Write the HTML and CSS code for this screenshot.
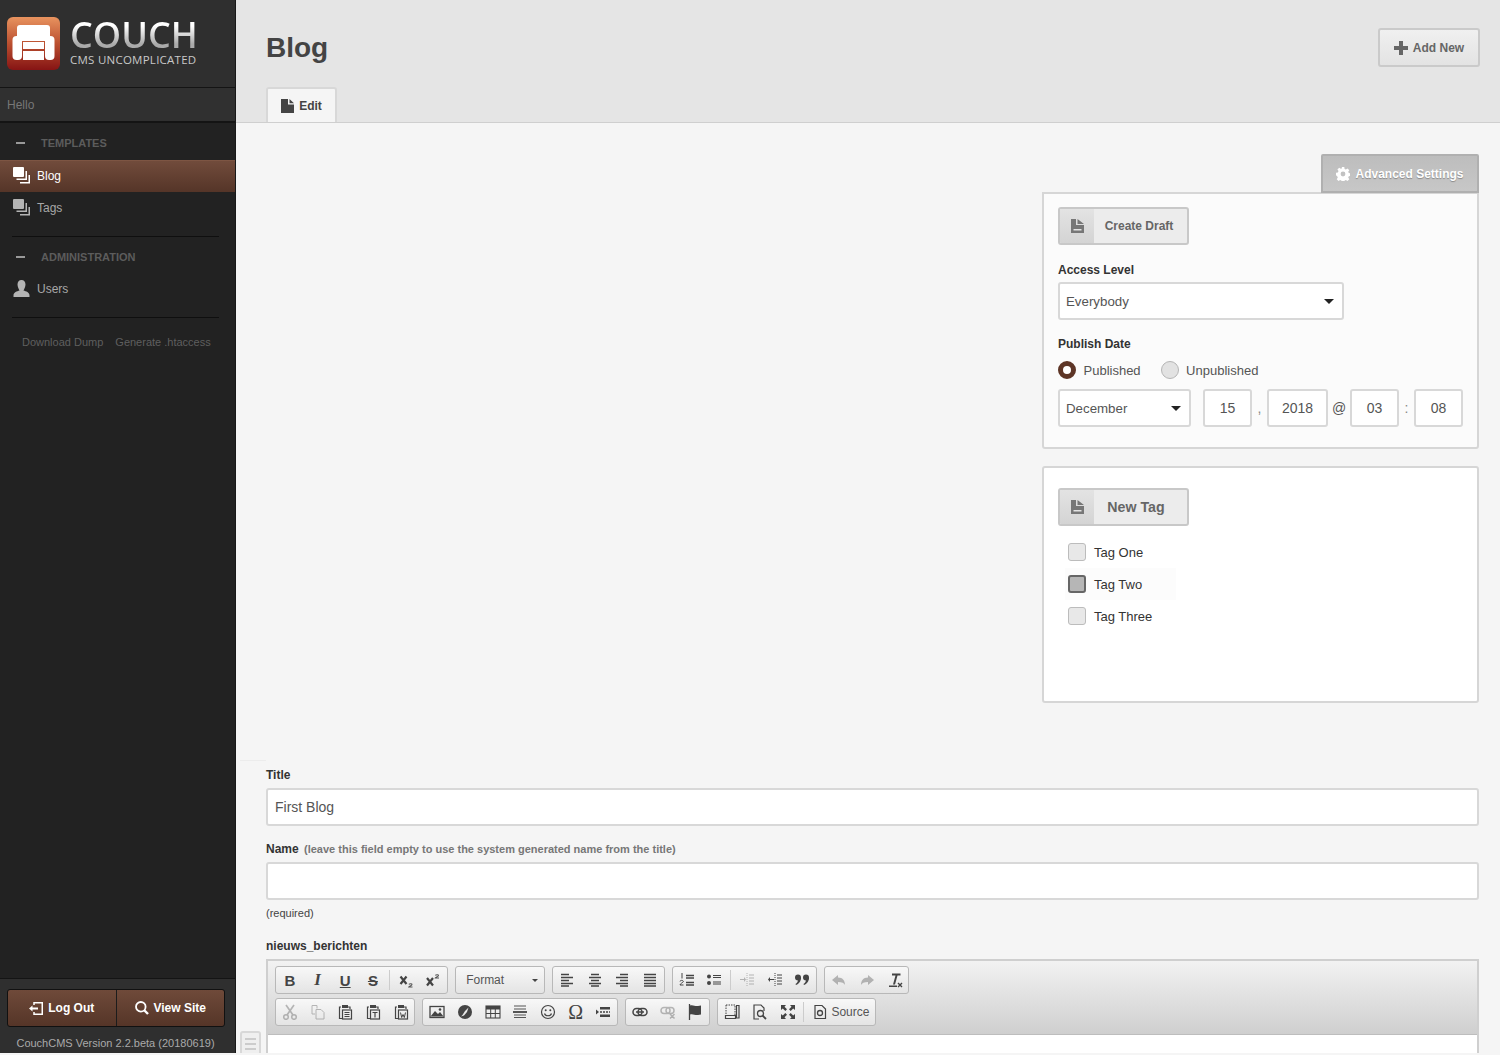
FILE: index.html
```html
<!DOCTYPE html>
<html lang="en">
<head>
<meta charset="utf-8">
<title>Blog - CouchCMS</title>
<link rel="stylesheet" href="styles.css">
</head>
<body>
<svg class="defs" width="0" height="0" aria-hidden="true">
  <symbol id="i-stack" viewBox="0 0 17 17"><rect x="0" y="0" width="11" height="10" rx="1" fill="currentColor"/><path d="M12.500 4v7.500H3.500v1.500H14V4zM15.500 8v7H7v1.500h10V8z" fill="currentColor"/></symbol>
  <symbol id="i-draft" viewBox="0 0 13 14"><path d="M0 0h5v6h8v8H0zM6.500 0 13 5H6.500z" fill="currentColor"/><rect x="2.500" y="10" width="8" height="1.500" fill="#e3e3e3"/></symbol>
</svg>
<div class="app">
  <aside class="sidebar">
    <div class="brand">
      <svg class="logo-mark" viewBox="0 0 53 53" width="53" height="53" aria-hidden="true">
        <defs><linearGradient id="lg" x1="0" y1="0" x2="0" y2="1"><stop offset="0" stop-color="#e8935f"/><stop offset=".5" stop-color="#bb5030"/><stop offset="1" stop-color="#861414"/></linearGradient></defs>
        <rect width="53" height="53" rx="6" fill="url(#lg)"/>
        <rect x="10" y="8" width="33" height="16" rx="3" fill="#fff"/>
        <rect x="5.500" y="19" width="9.500" height="24" rx="4" fill="#fff"/>
        <rect x="38" y="19" width="9.500" height="24" rx="4" fill="#fff"/>
        <rect x="16" y="25" width="21" height="7" fill="#fff"/>
        <rect x="16" y="34" width="21" height="9" fill="#fff"/>
      </svg>
      <div class="wordmark">
        <div class="wm-big">COUCH</div>
        <div class="wm-small">CMS UNCOMPLICATED</div>
      </div>
    </div>
    <div class="hello">Hello</div>
    <nav class="nav">
      <div class="nav-head"><span class="dash"></span>TEMPLATES</div>
      <a class="nav-item active"><svg class="nav-ic"><use href="#i-stack"/></svg>Blog</a>
      <a class="nav-item"><svg class="nav-ic"><use href="#i-stack"/></svg>Tags</a>
      <div class="nav-rule"></div>
      <div class="nav-head"><span class="dash"></span>ADMINISTRATION</div>
      <a class="nav-item"><svg class="nav-ic" viewBox="0 0 17 17"><path d="M8.500 0c2.500 0 4 2 4 4.500S11 9.500 10.500 10.500c2.500 1 6 1.500 6 5v1.500H.5v-1.500c0-3.500 3.500-4 6-5C6 9.500 4.500 7 4.500 4.500S6 0 8.500 0z" fill="currentColor"/></svg>Users</a>
      <div class="nav-rule"></div>
      <div class="tools"><a>Download Dump</a><a>Generate .htaccess</a></div>
    </nav>
    <div class="side-foot">
      <div class="foot-btns">
        <a class="foot-btn"><svg width="14" height="13" viewBox="0 0 14 13"><path d="M5 3V.75h8.250v11.500H5V10" fill="none" stroke="#fff" stroke-width="1.500"/><path d="M0 6.500l3.500-3v2H9v2H3.500v2z" fill="#fff"/></svg>Log Out</a>
        <a class="foot-btn"><svg width="14" height="14" viewBox="0 0 14 14"><circle cx="5.800" cy="5.800" r="4.800" fill="none" stroke="#fff" stroke-width="1.800"/><path d="M9 9l4 4" stroke="#fff" stroke-width="2.400"/></svg>View Site</a>
      </div>
      <div class="version">CouchCMS Version 2.2.beta (20180619)</div>
    </div>
  </aside>
  <main class="main">
    <header class="top">
      <div class="top-row">
        <h1>Blog</h1>
        <a class="add-new"><svg width="14" height="14" viewBox="0 0 14 14"><path d="M5 0h4v5h5v4H9v5H5V9H0V5h5z" fill="currentColor"/></svg>Add New</a>
      </div>
      <div class="tab"><svg width="13" height="14" viewBox="0 0 13 14"><path d="M0 0h7v5.500h6V14H0zM8.500 0 13 4.200H8.500z" fill="currentColor"/></svg>Edit</div>
    </header>
    <div class="content">
      <section class="side">
        <div class="adv-row"><a class="adv"><svg width="14" height="14" viewBox="0 0 14 14"><path fill="#fff" fill-rule="evenodd" d="M5.700 0h2.600l.3 1.900 1.300.6 1.600-1.100 1.800 1.800-1.100 1.600.6 1.300 1.900.3v2.600l-1.900.3-.6 1.300 1.100 1.600-1.800 1.800-1.600-1.100-1.300.6-.3 1.900H5.700l-.3-1.900-1.300-.6-1.600 1.100-1.800-1.800 1.100-1.600-.6-1.300L0 8.300V5.700l1.900-.3.6-1.300L1.400 2.500l1.800-1.800 1.600 1.100 1.300-.6zM7 4.600a2.400 2.400 0 1 0 0 4.800 2.400 2.400 0 0 0 0-4.800z"/></svg>Advanced Settings</a></div>
        <div class="panel settings">
          <a class="icon-btn"><span class="ib-ic"><svg width="13" height="14"><use href="#i-draft"/></svg></span><span class="ib-label">Create Draft</span></a>
          <label class="f-label access">Access Level</label>
          <div class="select wide"><span>Everybody</span><i class="caret"></i></div>
          <label class="f-label publish">Publish Date</label>
          <div class="radios">
            <span class="radio on"></span><span class="r-text">Published</span>
            <span class="radio"></span><span class="r-text">Unpublished</span>
          </div>
          <div class="date-row">
            <div class="select month"><span>December</span><i class="caret"></i></div>
            <div class="box d15">15</div><span class="dsep">,</span>
            <div class="box y">2018</div><span class="dsep at">@</span>
            <div class="box t">03</div><span class="dsep">:</span>
            <div class="box t">08</div>
          </div>
        </div>
        <div class="panel tags">
          <a class="icon-btn big"><span class="ib-ic"><svg width="13" height="14"><use href="#i-draft"/></svg></span><span class="ib-label">New Tag</span></a>
          <div class="check-list">
            <div class="check"><span class="cb"></span>Tag One</div>
            <div class="check sel"><span class="cb"></span>Tag Two</div>
            <div class="check"><span class="cb"></span>Tag Three</div>
          </div>
        </div>
      </section>
      <div class="divider"></div>
      <section class="fields">
        <label class="f-label">Title</label>
        <div class="input">First Blog</div>
        <label class="f-label name">Name <em>(leave this field empty to use the system generated name from the title)</em></label>
        <div class="input"></div>
        <div class="hint">(required)</div>
        <label class="f-label editor-label">nieuws_berichten</label>
        <div class="editor">
          <div class="toolbar">
            <div class="tb-row">
              <div class="tb-group">
                <span class="btn tx"><b>B</b></span>
                <span class="btn tx serif"><b><i>I</i></b></span>
                <span class="btn tx"><b class="ul">U</b></span>
                <span class="btn tx"><b class="st">S</b></span>
                <span class="sep"></span>
                <span class="btn"><svg viewBox="0 0 16 16"><path d="M2.500 4.500l6 7.500M8.500 4.500l-6 7.500" stroke="#444" stroke-width="2.200"/><path d="M10.500 15.500c0-1.300 3.500-1.500 3.500-3 0-1-2.300-1-3.200-.2M10.500 15h4" fill="none" stroke="#555" stroke-width="1.100"/></svg></span>
                <span class="btn"><svg viewBox="0 0 16 16"><path d="M2 6l6 7.500M8 6l-6 7.500" stroke="#444" stroke-width="2.200"/><path d="M10 6.500c0-1.300 3.500-1.500 3.500-3 0-1-2.300-1-3.200-.2M10 6h4" fill="none" stroke="#555" stroke-width="1.100"/></svg></span>
              </div>
              <div class="tb-group combo"><span class="combo-text">Format</span><i class="mini-caret"></i></div>
              <div class="tb-group">
                <span class="btn"><svg viewBox="0 0 16 16"><path d="M2 2.500h8M2 5.500h12M2 8.500h8M2 11.500h12M2 14h8" stroke="#444" stroke-width="1.500"/></svg></span>
                <span class="btn"><svg viewBox="0 0 16 16"><path d="M4 2.500h8M2 5.500h12M4 8.500h8M2 11.500h12M4 14h8" stroke="#444" stroke-width="1.500"/></svg></span>
                <span class="btn"><svg viewBox="0 0 16 16"><path d="M6 2.500h8M2 5.500h12M6 8.500h8M2 11.500h12M6 14h8" stroke="#444" stroke-width="1.500"/></svg></span>
                <span class="btn"><svg viewBox="0 0 16 16"><path d="M2 2.500h12M2 5.500h12M2 8.500h12M2 11.500h12M2 14h12" stroke="#444" stroke-width="1.500"/></svg></span>
              </div>
              <div class="tb-group">
                <span class="btn"><svg viewBox="0 0 16 16"><path d="M7 3.500h8M7 6h8M7 10.500h8M7 13h8" stroke="#444" stroke-width="1.300"/><path d="M3 1v5.500M1 9.500c0-1.500 3.500-1.500 3.300 0 0 1-3.300 2-3.300 3.500h3.500" fill="none" stroke="#444" stroke-width="1"/></svg></span>
                <span class="btn"><svg viewBox="0 0 16 16"><circle cx="3" cy="4.500" r="2" fill="#444"/><circle cx="3" cy="11" r="2" fill="#444"/><path d="M7 3.500h8M7 5.500h8M7 10h8M7 12h8" stroke="#444" stroke-width="1.200"/></svg></span>
                <span class="sep"></span>
                <span class="btn dim"><svg viewBox="0 0 16 16"><path d="M8 1v14" stroke="#444" stroke-dasharray="1 1"/><path d="M10 3h5M10 6h5M10 9h5M10 12h5" stroke="#444" stroke-width="1.200"/><path d="M1 7.500h4" stroke="#444"/><path d="M5 5l2 2.500-2 2.500z" fill="#444"/></svg></span>
                <span class="btn"><svg viewBox="0 0 16 16"><path d="M8 1v14" stroke="#444" stroke-dasharray="1 1"/><path d="M10 3h5M10 6h5M10 9h5M10 12h5" stroke="#444" stroke-width="1.200"/><path d="M7 7.500H3" stroke="#444"/><path d="M3 5 1 7.500 3 10z" fill="#444"/></svg></span>
                <span class="btn"><svg viewBox="0 0 16 16"><circle cx="4" cy="5.500" r="3" fill="#444"/><circle cx="12" cy="5.500" r="3" fill="#444"/><path d="M7 5.500C7 9 5 12 2 13l-.5-1c1.500-1 2.500-2.500 2.500-4.500zM15 5.500c0 3.500-2 6.500-5 7.500l-.5-1c1.500-1 2.500-2.500 2.500-4.500z" fill="#444"/></svg></span>
              </div>
              <div class="tb-group">
                <span class="btn dim"><svg viewBox="0 0 16 16"><path d="M7 3 1 8l6 5v-3c4 0 6 1 7 3 0-4-2-7.500-7-7.500z" fill="#444"/></svg></span>
                <span class="btn dim"><svg viewBox="0 0 16 16"><path d="M9 3l6 5-6 5v-3c-4 0-6 1-7 3 0-4 2-7.500 7-7.500z" fill="#444"/></svg></span>
                <span class="btn"><svg viewBox="0 0 16 16"><path d="M5 1.500h8.500v2H10.500L8 12.500H6l2.500-9H5zM2 13.500h8v1.500H2z" fill="#444"/><path d="M11 11l4 4M15 11l-4 4" stroke="#444" stroke-width="1.400"/></svg></span>
              </div>
            </div>
            <div class="tb-row">
              <div class="tb-group">
                <span class="btn dim"><svg viewBox="0 0 16 16"><circle cx="4" cy="13" r="2.300" fill="none" stroke="#444" stroke-width="1.500"/><circle cx="12" cy="13" r="2.300" fill="none" stroke="#444" stroke-width="1.500"/><path d="M5 11 12 1M11 11 4 1" stroke="#444" stroke-width="1.700"/></svg></span>
                <span class="btn dim"><svg viewBox="0 0 16 16"><path d="M2 1.500h5v3M2 1.500v8.500h3M6 5.500h5l3 3v6.500H6z" fill="none" stroke="#444"/></svg></span>
                <span class="btn"><svg viewBox="0 0 16 16"><path d="M4 3H2.500v11.500H5" fill="none" stroke="#444" stroke-width="1.200"/><path d="M11 3h2v2" fill="none" stroke="#444" stroke-width="1.200"/><rect x="5" y="1" width="6" height="3" fill="#444"/><rect x="5.500" y="6" width="9" height="9" fill="none" stroke="#444" stroke-width="1.200"/><path d="M7.500 8.500h5M7.500 10.500h5M7.500 12.500h5" stroke="#444"/></svg></span>
                <span class="btn"><svg viewBox="0 0 16 16"><path d="M4 3H2.500v11.500H5" fill="none" stroke="#444" stroke-width="1.200"/><path d="M11 3h2v2" fill="none" stroke="#444" stroke-width="1.200"/><rect x="5" y="1" width="6" height="3" fill="#444"/><rect x="5.500" y="6" width="9" height="9" fill="none" stroke="#444" stroke-width="1.200"/><path d="M7.500 8.500h5M10 8.500v5" stroke="#444" stroke-width="1.200"/></svg></span>
                <span class="btn"><svg viewBox="0 0 16 16"><path d="M4 3H2.500v11.500H5" fill="none" stroke="#444" stroke-width="1.200"/><path d="M11 3h2v2" fill="none" stroke="#444" stroke-width="1.200"/><rect x="5" y="1" width="6" height="3" fill="#444"/><rect x="5.500" y="6" width="9" height="9" fill="none" stroke="#444" stroke-width="1.200"/><path d="M7.500 8.500l1.200 5 1.300-3 1.300 3 1.200-5" fill="none" stroke="#444"/></svg></span>
              </div>
              <div class="tb-group">
                <span class="btn"><svg viewBox="0 0 16 16"><rect x="1" y="2.500" width="14" height="11" fill="none" stroke="#444" stroke-width="1.300"/><path d="M1.500 12.500 6 7l3 3 2-2 3.500 4.500z" fill="#444"/><circle cx="11" cy="5.500" r="1.300" fill="#444"/></svg></span>
                <span class="btn"><svg viewBox="0 0 16 16"><circle cx="8" cy="8" r="7" fill="#444"/><path d="M11.500 3.500 8 7 5.500 11 4 12.500 7 11.500 10 8z" fill="#e8e8e8"/></svg></span>
                <span class="btn"><svg viewBox="0 0 16 16"><rect x="1" y="2" width="14" height="12" fill="none" stroke="#444" stroke-width="1.100"/><rect x="1" y="2" width="14" height="3.500" fill="#444"/><path d="M1 9.500h14M5.700 5v9M10.300 5v9" stroke="#444"/></svg></span>
                <span class="btn"><svg viewBox="0 0 16 16"><path d="M2 2h12M2 5h12" stroke="#555" stroke-width="1.200"/><path d="M1 8h14" stroke="#222" stroke-width="1.500"/><path d="M2 11h12M2 13.500h12" stroke="#555" stroke-width="1.200"/></svg></span>
                <span class="btn"><svg viewBox="0 0 16 16"><circle cx="8" cy="8" r="6.500" fill="none" stroke="#444" stroke-width="1.200"/><circle cx="5.700" cy="6.300" r="1" fill="#444"/><circle cx="10.300" cy="6.300" r="1" fill="#444"/><path d="M4.500 9.500c1 3 6 3 7 0" fill="none" stroke="#444" stroke-width="1.200"/></svg></span>
                <span class="btn tx omega">Ω</span>
                <span class="btn"><svg viewBox="0 0 16 16"><path d="M1 5.500v5l3-2.500z" fill="#444"/><path d="M5 8h10" stroke="#444" stroke-width="1.500" stroke-dasharray="2 1"/><path d="M5 3h10v2.500H5zM5 10.500h10V13H5z" fill="#444"/></svg></span>
              </div>
              <div class="tb-group">
                <span class="btn"><svg viewBox="0 0 16 16"><rect x="1" y="4.500" width="9" height="7" rx="3.500" fill="none" stroke="#444" stroke-width="1.500"/><rect x="6" y="4.500" width="9" height="7" rx="3.500" fill="none" stroke="#444" stroke-width="1.500"/><path d="M4 8h8" stroke="#444" stroke-width="1.500"/></svg></span>
                <span class="btn dim"><svg viewBox="0 0 16 16"><rect x="1" y="3.500" width="9" height="6" rx="3" fill="none" stroke="#444" stroke-width="1.500"/><rect x="6" y="3.500" width="8" height="6" rx="3" fill="none" stroke="#444" stroke-width="1.500"/><path d="M10 10l4.500 4.500M14.500 10 10 14.500" stroke="#444" stroke-width="1.500"/></svg></span>
                <span class="btn"><svg viewBox="0 0 16 16"><path d="M2.500 0v16" stroke="#444" stroke-width="1.300"/><path d="M3 1.500c3-1 5 1 8 .5l3-.5v9l-3 .5c-3 .5-5-1.500-8-.5z" fill="#444"/></svg></span>
              </div>
              <div class="tb-group">
                <span class="btn"><svg viewBox="0 0 16 16"><path d="M2 1h9v10" fill="none" stroke="#444" stroke-dasharray="1.500 1"/><path d="M2 1v11" stroke="#444" stroke-dasharray="1.500 1"/><path d="M12.500 1.500h2.500v12.500h-2.500zM1.500 11.500h10v3h-10z" fill="none" stroke="#444" stroke-width="1.200"/></svg></span>
                <span class="btn"><svg viewBox="0 0 16 16"><path d="M7 15H2V1h7l3 3v3" fill="none" stroke="#444" stroke-width="1.200"/><circle cx="8.500" cy="9.500" r="3" fill="none" stroke="#444" stroke-width="1.300"/><path d="M10.500 11.500l3.500 3.500" stroke="#444" stroke-width="1.800"/></svg></span>
                <span class="btn"><svg viewBox="0 0 16 16"><path d="M1 1h5L4.500 2.800 7 5.300 5.300 7 2.800 4.500 1 6zM15 1v5l-1.800-1.500L10.700 7 9 5.300l2.500-2.500L10 1zM1 15v-5l1.800 1.500L5.300 9 7 10.700l-2.500 2.500L6 15zM15 15h-5l1.500-1.800L9 10.700 10.700 9l2.500 2.500L15 10z" fill="#444"/></svg></span>
                <span class="sep"></span>
                <span class="btn-src"><svg width="16" height="16" viewBox="0 0 16 16"><path d="M3 1.500h7l3.500 3.500v9.500H3z" fill="none" stroke="#444" stroke-width="1.200"/><circle cx="8" cy="9" r="2.500" fill="none" stroke="#444" stroke-width="1.300"/></svg><span>Source</span></span>
              </div>
            </div>
          </div>
          <div class="editor-body"></div>
        </div>
      </section>
      <a class="back-toggle"><i></i><i></i><i></i></a>
    </div>
  </main>
</div>
</body>
</html>
```
FILE: styles.css
```css
* { box-sizing: border-box; }
html, body { margin: 0; height: 100%; overflow: hidden; }
body { font-family: "Liberation Sans", Arial, sans-serif; color: #333; background: #f5f5f5; }
a { color: inherit; text-decoration: none; }
.defs { position: absolute; }
.app { display: flex; height: 1053px; }

/* sidebar */
.sidebar { width: 236px; flex: none; display: flex; flex-direction: column; background: #222; border-right: 1px solid #181818; }
.brand { height: 88px; flex: none; background: #2f2f2f; border-bottom: 1px solid #141414; display: flex; align-items: flex-start; padding: 17px 0 0 7px; gap: 10px; }
.logo-mark { flex: none; }
.wordmark { width: 130px; }
.wm-big { font: 600 36px/36px "Open Sans", sans-serif; height: 36px; background: linear-gradient(#fff 25%, #aaa 75%); -webkit-background-clip: text; background-clip: text; color: transparent; }
.wm-small { font: 400 11.500px/11px "Open Sans", sans-serif; color: #c8c8c8; margin-top: 1px; letter-spacing: .25px; white-space: nowrap; }
.hello { height: 35px; flex: none; background: #303030; border-bottom: 2px solid #141414; color: #777; font-size: 12px; line-height: 34px; padding-left: 7px; }
.nav { flex: 1; background: #222; display: flex; flex-direction: column; }
.nav-head { height: 37px; flex: none; display: flex; align-items: center; color: #5c5c5c; font-size: 11px; font-weight: 700; padding: 2px 0 0 16px; }
.dash { width: 9px; height: 2px; background: #999; margin-right: 16px; }
.nav-item { height: 32px; flex: none; display: flex; align-items: center; color: #a8a8a8; font-size: 12px; padding: 0 0 1px 13px; }
.nav-item.active { color: #fff; background: linear-gradient(#724c3c, #553528); box-shadow: inset 0 1px 0 #7d5543; }
.nav-ic { width: 17px; height: 17px; margin-right: 7px; color: #b4b4b4; flex: none; }
.active .nav-ic { color: #fff; }
.nav-rule { height: 1px; background: #0f0f0f; margin: 12px 16px 0 12px; flex: none; }
.nav-rule + .nav-head { height: 34px; margin-top: 2px; padding-top: 1px; }
.tools { display: flex; gap: 12px; padding: 18px 0 0 22px; color: #5f5f5f; font-size: 11px; line-height: 13px; }
.side-foot { height: 75px; flex: none; background: #2f2f2f; border-top: 1px solid #141414; padding: 10px 0 0 7px; }
.foot-btns { display: flex; width: 218px; height: 38px; border: 1px solid #111; border-radius: 3px; background: linear-gradient(#6f4a3a, #553528); }
.foot-btn { flex: 1 1 0; display: flex; align-items: center; justify-content: center; gap: 5px; color: #fff; font-size: 12px; font-weight: 700; }
.foot-btn + .foot-btn { border-left: 1px solid #1c1c1c; }
.version { color: #aaa; font-size: 11px; line-height: 13px; text-align: center; width: 217px; margin-top: 10px; white-space: nowrap; }

/* main */
.main { flex: 1; min-width: 0; display: flex; flex-direction: column; }
.top { height: 123px; flex: none; background: #e5e5e5; border-bottom: 1px solid #cfcfcf; padding: 0 20px 0 30px; display: flex; flex-direction: column; }
.top-row { height: 87px; flex: none; display: flex; align-items: flex-start; justify-content: space-between; }
h1 { margin: 31px 0 0; font-size: 28px; line-height: 34px; font-weight: 700; color: #444; }
.add-new { margin-top: 28px; width: 102px; height: 39px; display: flex; align-items: center; justify-content: center; gap: 5px; border: 2px solid #cacaca; border-radius: 3px; background: linear-gradient(#f0f0f0, #e3e3e3); color: #666; font-size: 12px; font-weight: 700; }
.tab { width: 71px; height: 36px; display: flex; align-items: center; justify-content: center; gap: 5px; background: #f5f5f5; border: 2px solid #d8d8d8; border-bottom: 0; border-radius: 3px 3px 0 0; color: #444; font-size: 12px; font-weight: 700; }
.content { flex: 1; position: relative; padding: 31px 21px 0 30px; overflow: hidden; }
.side { width: 437px; margin-left: auto; }
.adv-row { display: flex; justify-content: flex-end; }
.adv { width: 158px; height: 39px; display: flex; align-items: center; justify-content: center; gap: 5px; border: 2px solid #b0b0b0; border-radius: 2px 2px 0 0; background: linear-gradient(#bdbdbd, #c7c7c7); color: #fff; font-size: 12px; font-weight: 700; text-shadow: 0 1px 1px #888; }
.panel { background: #fff; border: 2px solid #d6d6d6; border-radius: 3px; padding: 14px; }
.settings { height: 257px; margin-top: -1px; padding-top: 13px; background: #fbfbfb; border-radius: 0 0 3px 3px; }
.tags { height: 237px; margin-top: 17px; padding-top: 20px; }
.icon-btn { display: flex; width: 131px; height: 38px; border: 2px solid #c8c8c8; border-radius: 3px; background: #ececec; color: #666; font-size: 12px; font-weight: 700; overflow: hidden; }
.icon-btn.big { font-size: 14.200px; }
.ib-ic { width: 34px; flex: none; display: flex; align-items: center; justify-content: center; background: linear-gradient(#e3e3e3, #d4d4d4); color: #777; }
.ib-label { flex: 1; display: flex; align-items: center; justify-content: center; padding-right: 3px; }
.big .ib-label { padding-right: 9px; }
.f-label { display: block; font-size: 12px; font-weight: 700; color: #333; line-height: 14px; }
.access { margin-top: 18px; }
.publish { margin-top: 17px; }
.select { display: flex; align-items: center; justify-content: space-between; height: 38px; background: #fff; border: 2px solid #d8d8d8; border-radius: 3px; color: #555; font-size: 13.300px; padding: 0 8px 0 6px; flex: none; }
.select.wide { width: 286px; margin-top: 5px; }
.caret { width: 0; height: 0; border-style: solid; border-width: 5px 5.500px 0; border-color: #222 transparent transparent; }
.radios { display: flex; align-items: center; height: 20px; margin-top: 9px; font-size: 13px; color: #555; }
.radio { width: 18px; height: 18px; border-radius: 50%; background: #e2e2e2; border: 1px solid #b5b5b5; margin-right: 7.500px; flex: none; }
.radio.on { background: #fff; border: 5.500px solid #5d3526; }
.r-text { margin-right: 20px; }
.date-row { display: flex; align-items: center; margin-top: 9px; font-size: 14px; color: #555; }
.month { width: 133px; margin-right: 12px; }
.box { height: 38px; background: #fff; border: 2px solid #d8d8d8; border-radius: 3px; display: flex; align-items: center; justify-content: center; flex: none; }
.d15, .t { width: 49px; }
.y { width: 61px; }
.dsep { width: 15px; text-align: center; flex: none; color: #888; }
.dsep.at { width: 22px; color: #555; }
.check-list { display: flex; flex-direction: column; margin: 10px 0 0 7px; }
.check { width: 111px; height: 32px; display: flex; align-items: center; gap: 8px; font-size: 13px; color: #333; padding-left: 3px; }
.check.sel { background: #fcfcfc; }
.cb { width: 18px; height: 18px; border: 1px solid #bcbcbc; border-radius: 3px; background: #e8e8e8; flex: none; }
.sel .cb { background: #b6b6b6; border: 2px solid #666; }
.divider { width: 26px; height: 1px; background: #ececec; margin: 57px 0 0 -26px; }
.fields { margin-top: 7px; }
.input { height: 38px; background: #fff; border: 2px solid #d8d8d8; border-radius: 3px; color: #555; font-size: 14px; line-height: 34px; padding-left: 7px; margin-top: 6px; }
.name { margin-top: 16px; }
.name em { font-style: normal; color: #777; font-size: 11px; margin-left: 2px; }
.hint { font-size: 11px; color: #444; margin-top: 7px; line-height: 13px; }
.editor-label { margin-top: 19px; }
.editor { margin-top: 6px; border: 2px solid #cfcfcf; border-bottom: 0; background: #fff; }
.toolbar { background: linear-gradient(#f2f2f2, #cfcfcf); border-bottom: 1px solid #bdbdbd; padding: 5px 7px; height: 74px; display: flex; flex-direction: column; gap: 4px; }
.tb-row { display: flex; gap: 7px; height: 28px; }
.tb-group { display: flex; align-items: center; height: 28px; border: 1px solid #b8b8b8; border-radius: 3px; background: linear-gradient(#f8f8f8, #e4e4e4); }
.btn { width: 27.700px; height: 26px; display: flex; align-items: center; justify-content: center; color: #444; flex: none; font-size: 15px; }
.btn svg { width: 16px; height: 16px; }
.btn.dim { opacity: .35; }
.btn.serif { font-family: "Liberation Serif", serif; font-size: 17px; }
.btn .ul { text-decoration: underline; }
.btn .st { text-decoration: line-through; }
.omega { font-family: "Liberation Serif", serif; font-size: 20px; }
.sep { width: 1px; height: 20px; background: #ccc; margin: 0 2px; flex: none; }
.combo { width: 90px; justify-content: space-between; padding: 0 6px 0 10px; font-size: 12px; color: #555; }
.mini-caret { width: 0; height: 0; border-style: solid; border-width: 3px 3px 0; border-color: #444 transparent transparent; }
.btn-src { display: flex; align-items: center; gap: 3px; padding: 0 6px; font-size: 12px; color: #555; white-space: nowrap; }
.editor-body { height: 40px; }
.back-toggle { position: absolute; left: 4px; top: 908px; width: 21px; height: 30px; border: 2px solid #d8d8d8; border-radius: 3px; background: #efefef; display: flex; flex-direction: column; gap: 3px; padding: 5px 3px; }
.back-toggle i { display: block; height: 2px; background: #ccc; }
```
